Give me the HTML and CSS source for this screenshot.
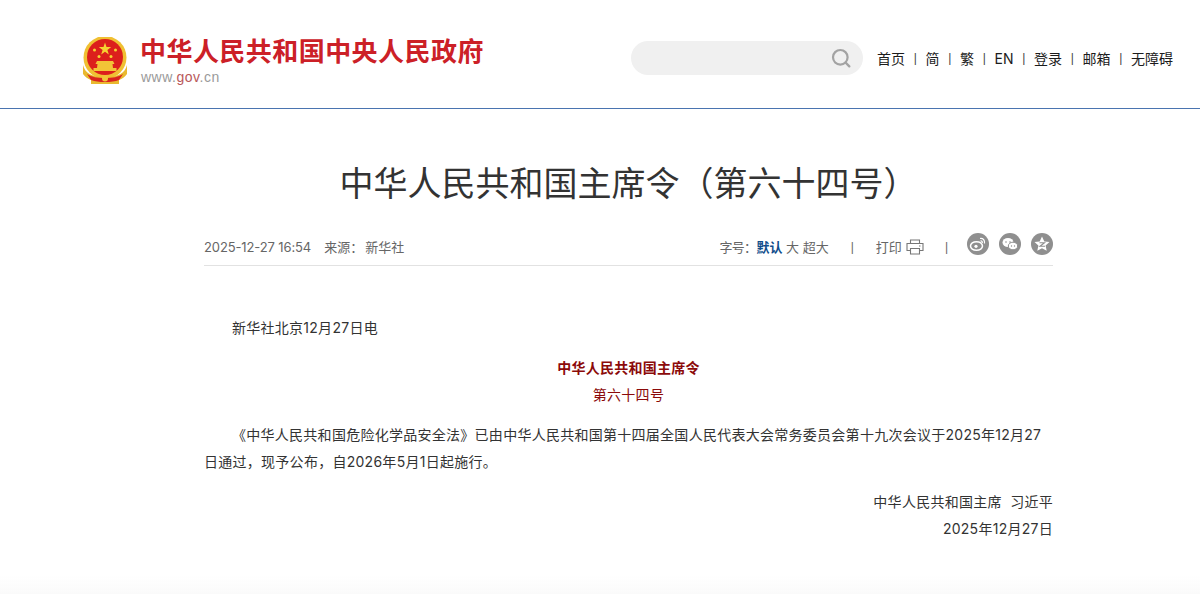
FILE: index.html
```html
<!DOCTYPE html>
<html lang="zh-CN">
<head>
<meta charset="utf-8">
<title>中华人民共和国主席令（第六十四号）</title>
<link rel="stylesheet" href="styles.css">
</head>
<body>
<header class="site-header">
  <a class="logo">
    <svg class="emblem" viewBox="0 0 44 48" width="44" height="48" aria-hidden="true">
      <circle cx="22" cy="20.500" r="21.500" fill="#f0c032"/>
      <circle cx="22" cy="20" r="18" fill="#dc1f1c"/>
      <path d="M22 5.500l1.500 4.500 4.700.1-3.800 2.800 1.400 4.500-3.800-2.700-3.800 2.700 1.400-4.500-3.800-2.800 4.700-.1z" fill="#f6d232"/>
      <circle cx="11.500" cy="13" r="1.500" fill="#f6d232"/><circle cx="32.500" cy="13" r="1.500" fill="#f6d232"/>
      <circle cx="16" cy="19.500" r="1.500" fill="#f6d232"/><circle cx="28" cy="19.500" r="1.500" fill="#f6d232"/>
      <path d="M14 24h16l1.500 3h-2l.5 4h3.500v3h-23v-3H14l.5-4h-2z" fill="#f2c437"/>
      <path d="M0 28c2 8 8 12 22 12s20-4 22-12l0 9c-2 3-5 5-8 6v4H8v-4c-3-1-6-3-8-6z" fill="#e9b92f"/>
      <path d="M4 37c5 3 10 4 18 4s13-1 18-4l-4 6c-4 1.500-8 2-14 2s-10-.5-14-2z" fill="#d9231f"/>
      <circle cx="22" cy="41.500" r="3" fill="#f2c437"/>
    </svg>
    <span class="logo-text">
      <span class="logo-name">中华人民共和国中央人民政府</span>
      <span class="logo-url">www.<b>gov</b>.cn</span>
    </span>
  </a>
  <div class="header-right">
    <div class="search">
      <svg viewBox="0 0 20 20" width="20" height="20" aria-hidden="true"><circle cx="9.300" cy="9.300" r="7.300" fill="none" stroke="#a3a3a3" stroke-width="2.200"/><path d="M14.500 14.500l3.800 3.800" stroke="#a3a3a3" stroke-width="2.400" stroke-linecap="round"/></svg>
    </div>
    <nav class="top-nav">
      <a>首页</a><i>|</i><a>简</a><i>|</i><a>繁</a><i>|</i><a>EN</a><i>|</i><a>登录</a><i>|</i><a>邮箱</a><i>|</i><a>无障碍</a>
    </nav>
  </div>
</header>
<main class="article">
  <h1>中华人民共和国主席令（第六十四号）</h1>
  <div class="meta">
    <div class="meta-left"><span class="date">2025-12-27 16:54</span><span class="source">来源：</span><span>新华社</span></div>
    <div class="meta-right">
      <span class="size"><span class="size-label">字号：</span><b>默认</b> 大 超大</span>
      <i class="sep">|</i>
      <span class="print">打印
        <svg viewBox="0 0 18 16" width="18" height="16" aria-hidden="true"><path d="M4.500 4.500V1h9v3.500M4.500 11.500H1V4.500h16v7h-3.500M4.500 9.500h9V15h-9zM13 7h1.500" fill="none" stroke="#777" stroke-width="1.100"/></svg>
      </span>
      <i class="sep sep-last">|</i>
      <span class="shares">
        <svg viewBox="0 0 22 22" width="22" height="22" aria-hidden="true"><circle cx="11" cy="11" r="11" fill="#8f8f8f"/><ellipse cx="9.500" cy="13" rx="6" ry="4.300" fill="none" stroke="#fff" stroke-width="1.500"/><circle cx="9" cy="13.300" r="1.600" fill="#fff"/><path d="M13 5.500c3-.5 5 1.500 4.500 5M13.500 8c1.500-.2 2 .7 1.800 2" fill="none" stroke="#fff" stroke-width="1.200"/></svg>
        <svg viewBox="0 0 22 22" width="22" height="22" aria-hidden="true"><circle cx="11" cy="11" r="11" fill="#8f8f8f"/><ellipse cx="9" cy="9.500" rx="5.500" ry="4.500" fill="#fff"/><ellipse cx="14" cy="13" rx="4.700" ry="3.800" fill="#fff" stroke="#8f8f8f"/><circle cx="7" cy="9" r=".8" fill="#8f8f8f"/><circle cx="11" cy="9" r=".8" fill="#8f8f8f"/><circle cx="12.500" cy="13" r=".7" fill="#8f8f8f"/><circle cx="15.500" cy="13" r=".7" fill="#8f8f8f"/></svg>
        <svg viewBox="0 0 22 22" width="22" height="22" aria-hidden="true"><circle cx="11" cy="11" r="11" fill="#8f8f8f"/><path d="M11 3.500l2.300 5 5.200.6-3.900 3.500 1.100 5.200L11 15.200l-4.700 2.600 1.100-5.200-3.900-3.500 5.200-.6z" fill="#fff"/><path d="M8.500 9.800h5l-4.500 3.500h5" fill="none" stroke="#8f8f8f" stroke-width="1.100"/></svg>
      </span>
    </div>
  </div>
  <div class="body">
    <p>新华社北京12月27日电</p>
    <p class="center red strong tight">中华人民共和国主席令</p>
    <p class="center red">第六十四号</p>
    <p>《中华人民共和国危险化学品安全法》已由中华人民共和国第十四届全国人民代表大会常务委员会第十九次会议于2025年12月27日通过，现予公布，自2026年5月1日起施行。</p>
    <p class="right tight">中华人民共和国主席&nbsp; 习近平</p>
    <p class="right">2025年12月27日</p>
  </div>
</main>
<div class="fade"></div>
</body>
</html>
```
FILE: styles.css
```css
* { box-sizing: border-box; }
html, body { margin: 0; height: 594px; overflow: hidden; background: #fff; }
body { font-family: "Inter", "Noto Sans CJK SC", sans-serif; color: #333; }
a { color: inherit; text-decoration: none; }
i { font-style: normal; font-family: "Liberation Sans", sans-serif; }

.site-header {
  height: 109px;
  border-bottom: 1px solid #4a74b0;
  display: flex;
  justify-content: space-between;
  padding: 36px 27px 0 83px;
}
.logo { display: flex; gap: 13px; align-items: flex-start; }
.emblem { display: block; margin-top: 1px; }
.logo-text { display: flex; flex-direction: column; }
.logo-name {
  font-size: 26px;
  line-height: 32px;
  font-weight: 700;
  color: #cc2027;
  letter-spacing: .45px;
  white-space: nowrap;
}
.logo-url {
  font-family: "Liberation Sans", sans-serif;
  font-size: 14px;
  line-height: 18px;
  padding-left: 1px;
  color: #9a9a9a;
  letter-spacing: .5px;
}
.logo-url b { font-weight: 400; color: #b9585a; }

.header-right { display: flex; align-items: flex-start; gap: 14px; padding-top: 5px; }
.search {
  width: 232px;
  height: 34px;
  border-radius: 17px;
  background: #f0f0f0;
  display: flex;
  align-items: center;
  justify-content: flex-end;
  padding-right: 12px;
}
.top-nav { display: flex; height: 34px; align-items: center; font-size: 14px; color: #1c1c1c; }
.top-nav i { width: 20.5px; text-align: center; font-size: 12px; color: #444; }

.article { width: 849px; margin: 0 0 0 204px; }
h1 {
  margin: 52px 0 0;
  font-size: 34px;
  line-height: 46px;
  font-weight: 400;
  text-align: center;
  color: #333;
  white-space: nowrap;
}
.meta {
  margin-top: 28px;
  height: 31px;
  border-bottom: 1px solid #e2e2e2;
  display: flex;
  justify-content: space-between;
  align-items: flex-start;
  font-size: 13px;
  color: #666;
}
.meta-left { display: flex; gap: 13px; padding-top: 2px; line-height: 20px; }
.date { letter-spacing: -.12px; }
.source { margin-right: -11px; }
.meta-right { display: flex; align-items: flex-start; line-height: 20px; }
.meta-right > span, .meta-right > i { padding-top: 2px; }
.size-label { letter-spacing: -.7px; }
.size b { color: #0f4c8a; }
.sep { margin: 0 22px; font-size: 12px; }
.meta-right > .sep-last { margin: 0 19px 0 21px; }
.print { display: flex; gap: 4px; align-items: center; height: 22px; }
.meta-right > .shares { display: flex; gap: 10px; padding-top: 0; margin-top: -2px; }
.shares svg { display: block; }

.body { margin-top: 48px; font-size: 14px; color: #333; }
.body p { margin: 0 0 13px; line-height: 27px; text-indent: 28px; letter-spacing: .27px; }
.body .tight { margin-bottom: 0; }
.body .center { text-align: center; text-indent: 0; }
.body .right { text-align: right; text-indent: 0; }
.red { color: #8b0a0a; }
.strong { font-weight: 700; }

.fade {
  position: fixed;
  left: 0;
  right: 0;
  bottom: 0;
  height: 20px;
  background: linear-gradient(to bottom, rgba(250,250,250,0), #fafafa);
  pointer-events: none;
}
```
